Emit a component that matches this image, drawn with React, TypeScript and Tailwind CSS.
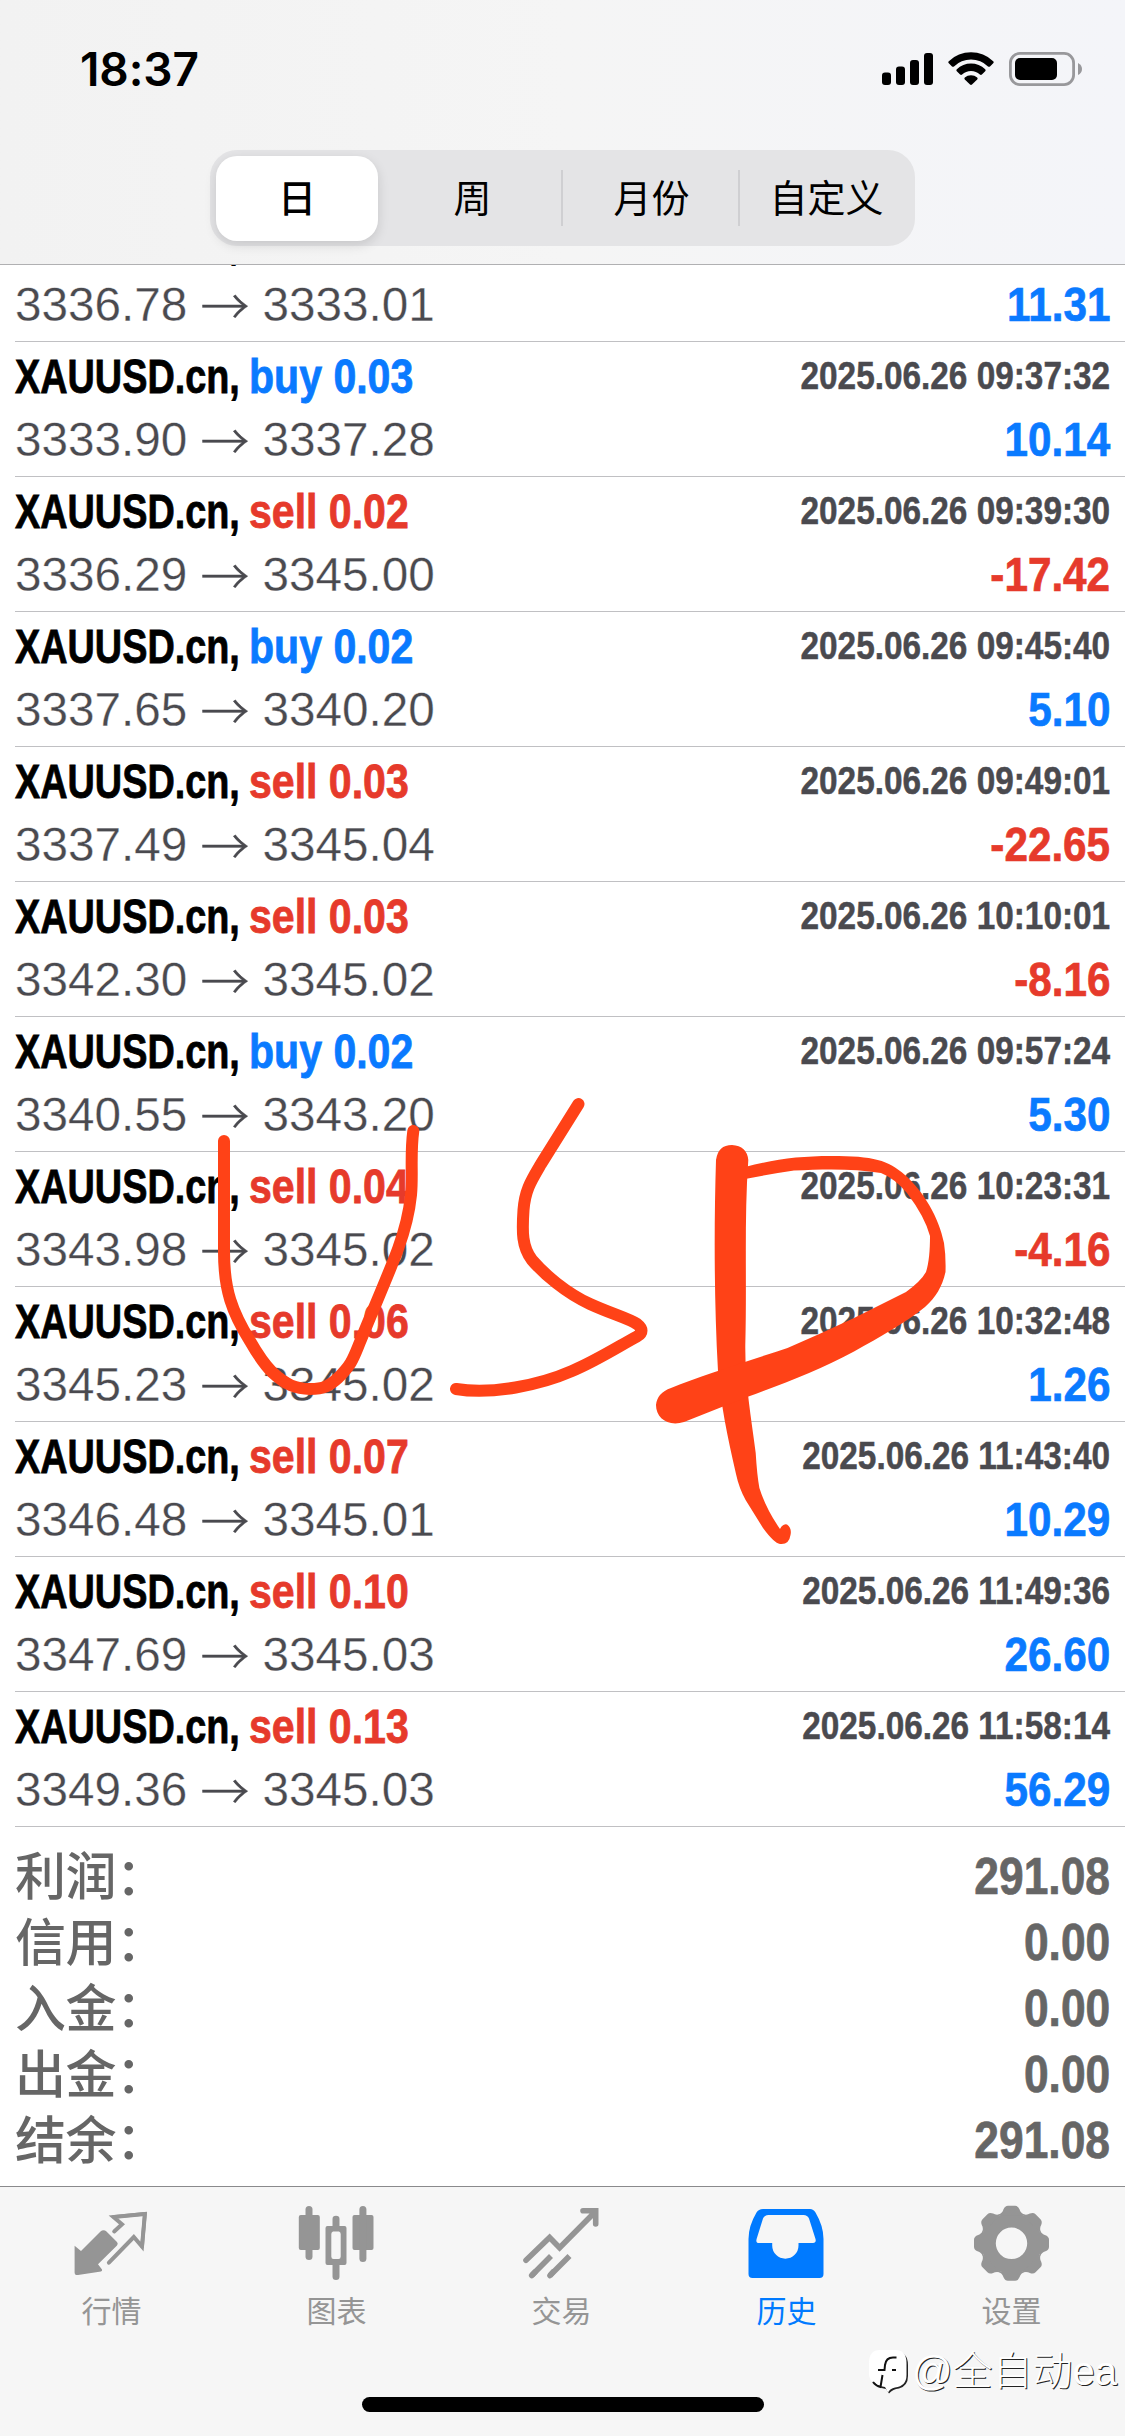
import type { ReactNode } from 'react';
import clsx from 'clsx';

interface Deal {
  side?: 'buy' | 'sell';
  volume?: string;
  open: string;
  close: string;
  time?: string;
  profit: string;
}

const deals: Deal[] = [
  { open: '3336.78', close: '3333.01', profit: '11.31' },
  { side: 'buy', volume: '0.03', open: '3333.90', close: '3337.28', time: '2025.06.26 09:37:32', profit: '10.14' },
  { side: 'sell', volume: '0.02', open: '3336.29', close: '3345.00', time: '2025.06.26 09:39:30', profit: '-17.42' },
  { side: 'buy', volume: '0.02', open: '3337.65', close: '3340.20', time: '2025.06.26 09:45:40', profit: '5.10' },
  { side: 'sell', volume: '0.03', open: '3337.49', close: '3345.04', time: '2025.06.26 09:49:01', profit: '-22.65' },
  { side: 'sell', volume: '0.03', open: '3342.30', close: '3345.02', time: '2025.06.26 10:10:01', profit: '-8.16' },
  { side: 'buy', volume: '0.02', open: '3340.55', close: '3343.20', time: '2025.06.26 09:57:24', profit: '5.30' },
  { side: 'sell', volume: '0.04', open: '3343.98', close: '3345.02', time: '2025.06.26 10:23:31', profit: '-4.16' },
  { side: 'sell', volume: '0.06', open: '3345.23', close: '3345.02', time: '2025.06.26 10:32:48', profit: '1.26' },
  { side: 'sell', volume: '0.07', open: '3346.48', close: '3345.01', time: '2025.06.26 11:43:40', profit: '10.29' },
  { side: 'sell', volume: '0.10', open: '3347.69', close: '3345.03', time: '2025.06.26 11:49:36', profit: '26.60' },
  { side: 'sell', volume: '0.13', open: '3349.36', close: '3345.03', time: '2025.06.26 11:58:14', profit: '56.29' },
];

const summary = [
  { label: '利润', value: '291.08' },
  { label: '信用', value: '0.00' },
  { label: '入金', value: '0.00' },
  { label: '出金', value: '0.00' },
  { label: '结余', value: '291.08' },
];

const periods = ['日', '周', '月份', '自定义'];

function StatusBar() {
  return (
    <div className="flex h-[150px] items-start justify-between pl-[80px] pr-[43px] pt-[40px]">
      <span className="font-[Inter,sans-serif] text-[46px] font-semibold leading-[58px] tracking-[-0.1px]">
        18:37
      </span>
      <svg className="mt-[10px]" width="202" height="38" viewBox="880 50 202 38">
        <rect x="882" y="72.5" width="9" height="12.5" rx="3" />
        <rect x="896" y="66.5" width="9" height="18.5" rx="3" />
        <rect x="910" y="60" width="9" height="25" rx="3" />
        <rect x="924" y="53" width="9" height="32" rx="3" />
        <path d="M948.8 61.2a32 32 0 0 1 44.4 0q1 1 0 2l-3.2 3.2q-1 .9-2 0a24.500 24.500 0 0 0-34 0q-1 .9-2 0l-3.200-3.200q-1-1 0-2z" />
        <path d="M956.800 69.300a20.500 20.500 0 0 1 28.400 0q1 1 0 2l-3.300 3.200q-1 .9-2 0a13 13 0 0 0-17.800 0q-1 .9-2 0l-3.300-3.200q-1-1 0-2z" />
        <path d="M964.800 77.500a9.500 9.500 0 0 1 12.400 0q1 1 0 2l-5.200 5.100q-1 .9-2 0l-5.200-5.100q-1-1 0-2z" />
        <rect x="1010.400" y="53.400" width="63.200" height="31.200" rx="9.500" fill="none" stroke="#98989b" strokeWidth="2.800" />
        <rect x="1015" y="58" width="42" height="22" rx="5" />
        <path d="M1078 63q4 2 4 6t-4 6z" fill="#98989b" />
      </svg>
    </div>
  );
}

function PeriodTabs() {
  return (
    <div className="mx-auto flex h-24 w-[705px] items-center rounded-[27px] bg-[#e4e4e6] px-1.5">
      {periods.map((label, i) => (
        <div
          key={label}
          className={clsx(
            'flex items-center justify-center pt-0.5 text-[38px] leading-none',
            i === 0 && 'h-[85px] w-[162px] rounded-[21px] bg-white font-medium shadow-[0_4px_12px_rgba(0,0,0,0.13)]',
            i === 1 && 'h-14 w-[185px] border-r-2 border-[#cfcfd2] pl-1.5',
            i === 2 && 'h-14 w-[177px] border-r-2 border-[#cfcfd2] pl-0.5',
            i === 3 && 'h-14 w-[169px] pl-1',
          )}
        >
          {label}
        </div>
      ))}
    </div>
  );
}

function DealRow({ deal }: { deal: Deal }) {
  return (
    <div className="ml-[15px] h-[135px] shrink-0 border-b border-[#c0c0c3] pr-[15px] pt-[3px]">
      <div className="flex h-[63px] justify-between font-bold [-webkit-text-stroke:0.8px_currentColor]">
        <div className="flex text-[48px] leading-[63px]">
          <span className="w-[234px] origin-left scale-x-[0.788] whitespace-nowrap">XAUUSD.cn,</span>
          {deal.side && (
            <span
              className={clsx(
                'origin-left scale-x-[0.855] whitespace-nowrap',
                deal.side === 'buy' ? 'text-[#0a7aff]' : 'text-[#e63a2b]',
              )}
            >
              {deal.side} {deal.volume}
            </span>
          )}
        </div>
        <span className="origin-right scale-x-[0.855] whitespace-nowrap text-[39px] leading-[61px] text-[#4a4a4f] [-webkit-text-stroke:0.5px_currentColor]">
          {deal.time}
        </span>
      </div>
      <div className="flex h-[63px] justify-between text-[48px] leading-[63px]">
        <span className="flex text-[47.7px] text-[#4a4a4f] [-webkit-text-stroke:0.3px_white]">
          {deal.open}
          <span className="w-[75px] text-center font-['Noto_Sans_CJK_SC',sans-serif] text-[49px] font-light leading-[61px] [-webkit-text-stroke:0.3px_#4a4a4f]">
            →
          </span>
          {deal.close}
        </span>
        <span
          className={clsx(
            'origin-right scale-x-[0.88] font-bold [-webkit-text-stroke:0.7px_currentColor]',
            deal.profit.startsWith('-') ? 'text-[#e63a2b]' : 'text-[#0a7aff]',
          )}
        >
          {deal.profit}
        </span>
      </div>
    </div>
  );
}

const toothPath = 'M-14 -28Q-9 -30 -8 -34Q-6.500 -37.500 -3.500 -37.500H3.500Q6.500 -37.500 8 -34Q9 -30 14 -28Z';

function QuotesIcon() {
  return (
    <svg width="90" height="90" viewBox="0 0 90 90">
      <path
        fill="currentColor"
        d="M7.600 45.700L14 51L33.500 31.500Q36.500 28.800 39.500 31.500L50 42Q51.500 43.800 50 45.500L31 64.300L35 69.500Q35.500 71 34 71.400L11 75Q7.600 75.400 7.600 72.500Z"
      />
      <path
        fill="none"
        stroke="currentColor"
        strokeWidth="4"
        strokeLinecap="round"
        d="M47.200 31.500L55 24.300L46.500 17L77.900 14L75 46.500L66.800 37L41.900 62.700"
      />
      <path fill="none" stroke="currentColor" strokeWidth="3.600" strokeLinejoin="round" d="M45.500 17L77.900 13.700L75 47.500" />
    </svg>
  );
}

function ChartIcon() {
  return (
    <svg width="90" height="90" viewBox="0 0 90 90" fill="currentColor">
      <rect x="6.800" y="15" width="21" height="35" rx="2" />
      <rect x="13.500" y="6" width="7" height="54" rx="3.500" />
      <path
        fillRule="evenodd"
        d="M35.500 26H52.500Q54.500 26 54.500 28V63Q54.500 65 52.500 65H35.500Q33.500 65 33.500 63V28Q33.500 26 35.500 26ZM41 31.500Q39.300 32 39.300 34V56.500Q39.300 59 41.500 59H46.500Q48.700 59 48.700 56.500V34Q48.700 32 47 31.500Z"
      />
      <path d="M40.500 26V19Q40.500 15.700 44 15.700T47.500 19V26ZM40.500 65V76.500Q40.500 80 44 80T47.500 76.500V65Z" />
      <rect x="60.500" y="15" width="21" height="35" rx="2" />
      <rect x="67.400" y="6" width="7" height="56" rx="3.500" />
    </svg>
  );
}

function TradeIcon() {
  return (
    <svg width="90" height="90" viewBox="0 0 90 90" fill="none" stroke="currentColor" strokeWidth="5.600">
      <path strokeLinecap="round" d="M9 60.300L32.600 37.500L42.600 47.700L77 13M66 10.700H78.700V24" />
      <path strokeLinecap="round" d="M14.700 75.500L18 72M33 75.500L36 72" />
      <path d="M14.700 75.500L34 56M33 75.500L52.500 56" />
    </svg>
  );
}

function HistoryIcon() {
  return (
    <svg width="90" height="90" viewBox="0 0 90 90" fill="currentColor">
      <path
        fillRule="evenodd"
        d="M21 9H68Q71.500 9 73.500 12.500Q81.500 26 81.500 39V74Q81.500 78 77.500 78H10.500Q6.500 78 6.500 74V39Q6.500 26 14.500 12.500Q16.500 9 21 9ZM26.500 15Q22.500 15 21 18.500L14.600 39Q13.500 43 17 43H30.200V45.500A13.150 13.150 0 0 0 56.500 45.500V43H71Q74.500 43 73.500 39L67 18.500Q65.500 15 61.500 15Z"
      />
    </svg>
  );
}

function SettingsIcon() {
  return (
    <svg width="90" height="90" viewBox="0 0 90 90">
      <g transform="translate(44.500 43.300)" fill="currentColor">
        <circle r="23" fill="none" stroke="currentColor" strokeWidth="14.600" />
        <path d={toothPath} />
        <path d={toothPath} transform="rotate(45)" />
        <path d={toothPath} transform="rotate(90)" />
        <path d={toothPath} transform="rotate(135)" />
        <path d={toothPath} transform="rotate(180)" />
        <path d={toothPath} transform="rotate(225)" />
        <path d={toothPath} transform="rotate(270)" />
        <path d={toothPath} transform="rotate(315)" />
      </g>
    </svg>
  );
}

const tabs: { label: string; icon: ReactNode; active?: boolean }[] = [
  { label: '行情', icon: <QuotesIcon /> },
  { label: '图表', icon: <ChartIcon /> },
  { label: '交易', icon: <TradeIcon /> },
  { label: '历史', icon: <HistoryIcon />, active: true },
  { label: '设置', icon: <SettingsIcon /> },
];

function TabBar() {
  return (
    <nav className="relative flex h-[250px] shrink-0 border-t border-[#8a8a8c] bg-[#f6f6f6] pt-[13px]">
      {tabs.map((tab) => (
        <div
          key={tab.label}
          className={clsx('flex flex-1 flex-col items-center pr-0.5', tab.active ? 'text-[#007aff]' : 'text-[#959595]')}
        >
          {tab.icon}
          <span className="text-[30px] leading-[44px]">{tab.label}</span>
        </div>
      ))}
      <div className="absolute bottom-6 left-[362px] h-[15px] w-[402px] rounded-full bg-black" />
      <Watermark />
    </nav>
  );
}

function Watermark() {
  return (
    <div className="absolute bottom-[38px] right-[8px] flex items-center gap-0.5">
      <svg width="42" height="46" viewBox="0 0 42 46">
        <path d="M13 4H28Q40 4 40 17V28Q40 38 31 40.500Q25 41 21 45.500L18 41Q3 38 3 27V17Q3 4 13 4Z" fill="#222" />
        <path d="M12 2H27Q38.500 2 38.500 15V27Q38.500 38 27 39.500Q22 40.500 20 44.500L17 39Q1 36 1 26V15Q1 2 12 2Z" fill="#fff" />
        <path d="M28.500 9.500H25Q18 9.500 17 17L16.500 22H10M24 22H28M14.500 27L12.500 39Q8 38 5 34" fill="none" stroke="#111" strokeWidth="2" />
      </svg>
      <span className="whitespace-nowrap text-[40px] font-light leading-[54px] text-white [text-shadow:1px_1px_0_#222]">
        @全自动ea
      </span>
    </div>
  );
}

// Freehand marker strokes laid over the deal list
function MarkerOverlay() {
  return (
    <svg className="pointer-events-none absolute left-0 top-[1090px]" width="1125" height="480" viewBox="0 1090 1125 480">
      <g fill="none" stroke="#ff4217" strokeWidth="12" strokeLinecap="round" strokeLinejoin="round">
        <path d="M224 1141V1252C224 1290 232 1312 250 1341C258 1355 264 1364 272 1372C286 1385 296 1389 310 1389C324 1389 329 1386 338 1378C352 1364 353 1359 360 1342C372 1312 388 1276 398 1249C402 1238 409 1215 411 1195C413 1175 410 1155 413.300 1131" />
        <path d="M578.500 1104L541 1164C531 1181 525 1190 523.500 1210C522 1232 522 1247 532 1260C544 1274 566 1293 590 1304C612 1314 630 1319 637 1324Q646 1331 637 1336.500C621 1345 596 1361 572 1371C540 1385 492 1395 456 1389" />
      </g>
      <g fill="#ff4217">
        <path d="M716 1160Q718 1145 732 1145Q747 1146 748.300 1160C744 1220 747 1280 745.300 1345C745 1385 751 1415 755.700 1453Q757 1475 759.400 1488Q766 1509 780 1529Q783 1523.500 787 1524.500Q792 1528 790.500 1535Q789 1545 780 1544Q774 1543 763 1528L745.600 1500Q739 1488 736 1474C727 1435 721 1405 718 1371C714 1300 714 1225 716 1160Z" />
        <path d="M745 1167C775 1159 800 1156 831 1156C874 1156 888 1160 905 1175C923 1191 939 1217 944 1243Q946 1256 945.500 1272C942 1287 936 1297 925 1307C905 1323 880 1337 854 1351.500C820 1370 785 1383 747 1397L684 1422C668 1427 656 1418 656 1405Q657 1393 671 1388C700 1376 745 1362 787.500 1348Q820 1334 854 1318L906 1292Q921 1281 926 1272C929 1263 930 1250 930 1236Q925 1217 907 1193Q894 1178 881 1173C855 1168.500 825 1169 794 1170.500Q770 1174 745 1179Z" />
      </g>
    </svg>
  );
}

export default function App() {
  return (
    <div className="relative flex h-[2436px] w-[1125px] flex-col overflow-hidden bg-white font-['Liberation_Sans','Noto_Sans_CJK_SC',sans-serif] text-black">
      <header className="h-[265px] shrink-0 border-b border-[#b0b0b2] bg-linear-to-r from-[#f2f2f2] via-[#f5f5f5] to-[#f4f5f9]">
        <StatusBar />
        <PeriodTabs />
      </header>

      <main className="flex h-[1921px] shrink-0 flex-col justify-end overflow-hidden">
        {deals.map((deal) => (
          <DealRow key={deal.open} deal={deal} />
        ))}
        <div className="h-[359px] shrink-0 px-[15px] pt-4 text-[#666]">
          {summary.map((item) => (
            <div key={item.label} className="flex h-[66px] justify-between">
              <span className="font-['Noto_Sans_CJK_SC',sans-serif] text-[51px] font-medium leading-[60px] tracking-[-0.5px]">
                {item.label}：
              </span>
              <span className="origin-right scale-x-[0.87] text-[51px] font-bold leading-[68px] [-webkit-text-stroke:0.7px_currentColor]">
                {item.value}
              </span>
            </div>
          ))}
        </div>
      </main>

      <TabBar />
      <MarkerOverlay />
    </div>
  );
}
